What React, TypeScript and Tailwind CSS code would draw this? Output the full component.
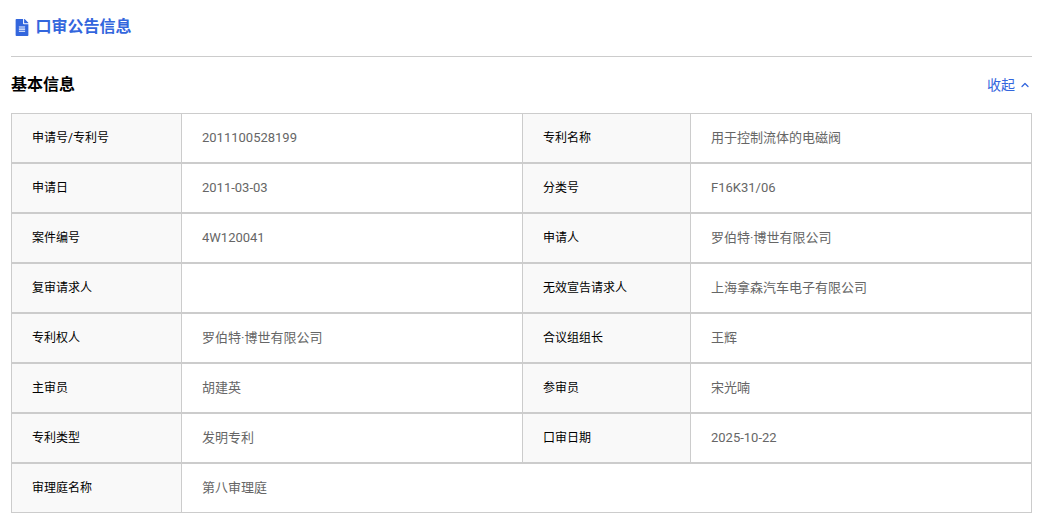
import React from 'react';
import { FaFileAlt } from 'react-icons/fa';
import { ChevronUp } from 'lucide-react';

const rows: string[][] = [
  ['申请号/专利号', '2011100528199', '专利名称', '用于控制流体的电磁阀'],
  ['申请日', '2011-03-03', '分类号', 'F16K31/06'],
  ['案件编号', '4W120041', '申请人', '罗伯特·博世有限公司'],
  ['复审请求人', '', '无效宣告请求人', '上海拿森汽车电子有限公司'],
  ['专利权人', '罗伯特·博世有限公司', '合议组组长', '王辉'],
  ['主审员', '胡建英', '参审员', '宋光喃'],
  ['专利类型', '发明专利', '口审日期', '2025-10-22'],
  ['审理庭名称', '第八审理庭'],
];

const Label = ({ text, width }: { text: string; width: string }) => (
  <div className={`${width} shrink-0 flex items-center pl-5 bg-[#f9f9f9] text-[12px] text-black`}>{text}</div>
);

const Value = ({ text, className }: { text: string; className: string }) => (
  <div className={`${className} flex items-center pl-5 border-x border-[#cccccc] text-[13px] text-[#666666]`}>{text}</div>
);

export default function App() {
  return (
    <div className="w-[1038px] h-[520px] overflow-hidden bg-white px-[11px] pr-[6px] font-['Roboto','Noto_Sans_CJK_SC',sans-serif]">
      {/* Page title */}
      <div className="h-[57px] border-b border-[#cccccc] flex items-start pt-[17px] pl-[4px] gap-[6.5px] text-[#3366dd]">
        <FaFileAlt className="w-[14px] h-[17px] mt-[2px]" />
        <span className="text-[16px] leading-[20px] font-bold">口审公告信息</span>
      </div>

      {/* Section header */}
      <div className="h-[56px] flex items-center justify-between">
        <span className="text-[16px] font-bold text-black">基本信息</span>
        <div className="flex items-center gap-1 pr-px text-[14px] text-[#3366dd]">
          <span>收起</span>
          <ChevronUp className="w-3 h-3" strokeWidth={2.5} />
        </div>
      </div>

      {/* Info table */}
      <div className="flex flex-col">
        {rows.map((row) => (
          <div key={row[0]} className="h-[50px] flex border border-[#cccccc]">
            <Label text={row[0]} width="w-[169px]" />
            {row.length > 2 ? (
              <>
                <Value text={row[1]} className="w-[342px] shrink-0" />
                <Label text={row[2]} width="w-[167px]" />
                <Value text={row[3]} className="flex-1 border-r-0" />
              </>
            ) : (
              <Value text={row[1]} className="flex-1 border-r-0" />
            )}
          </div>
        ))}
      </div>
    </div>
  );
}
